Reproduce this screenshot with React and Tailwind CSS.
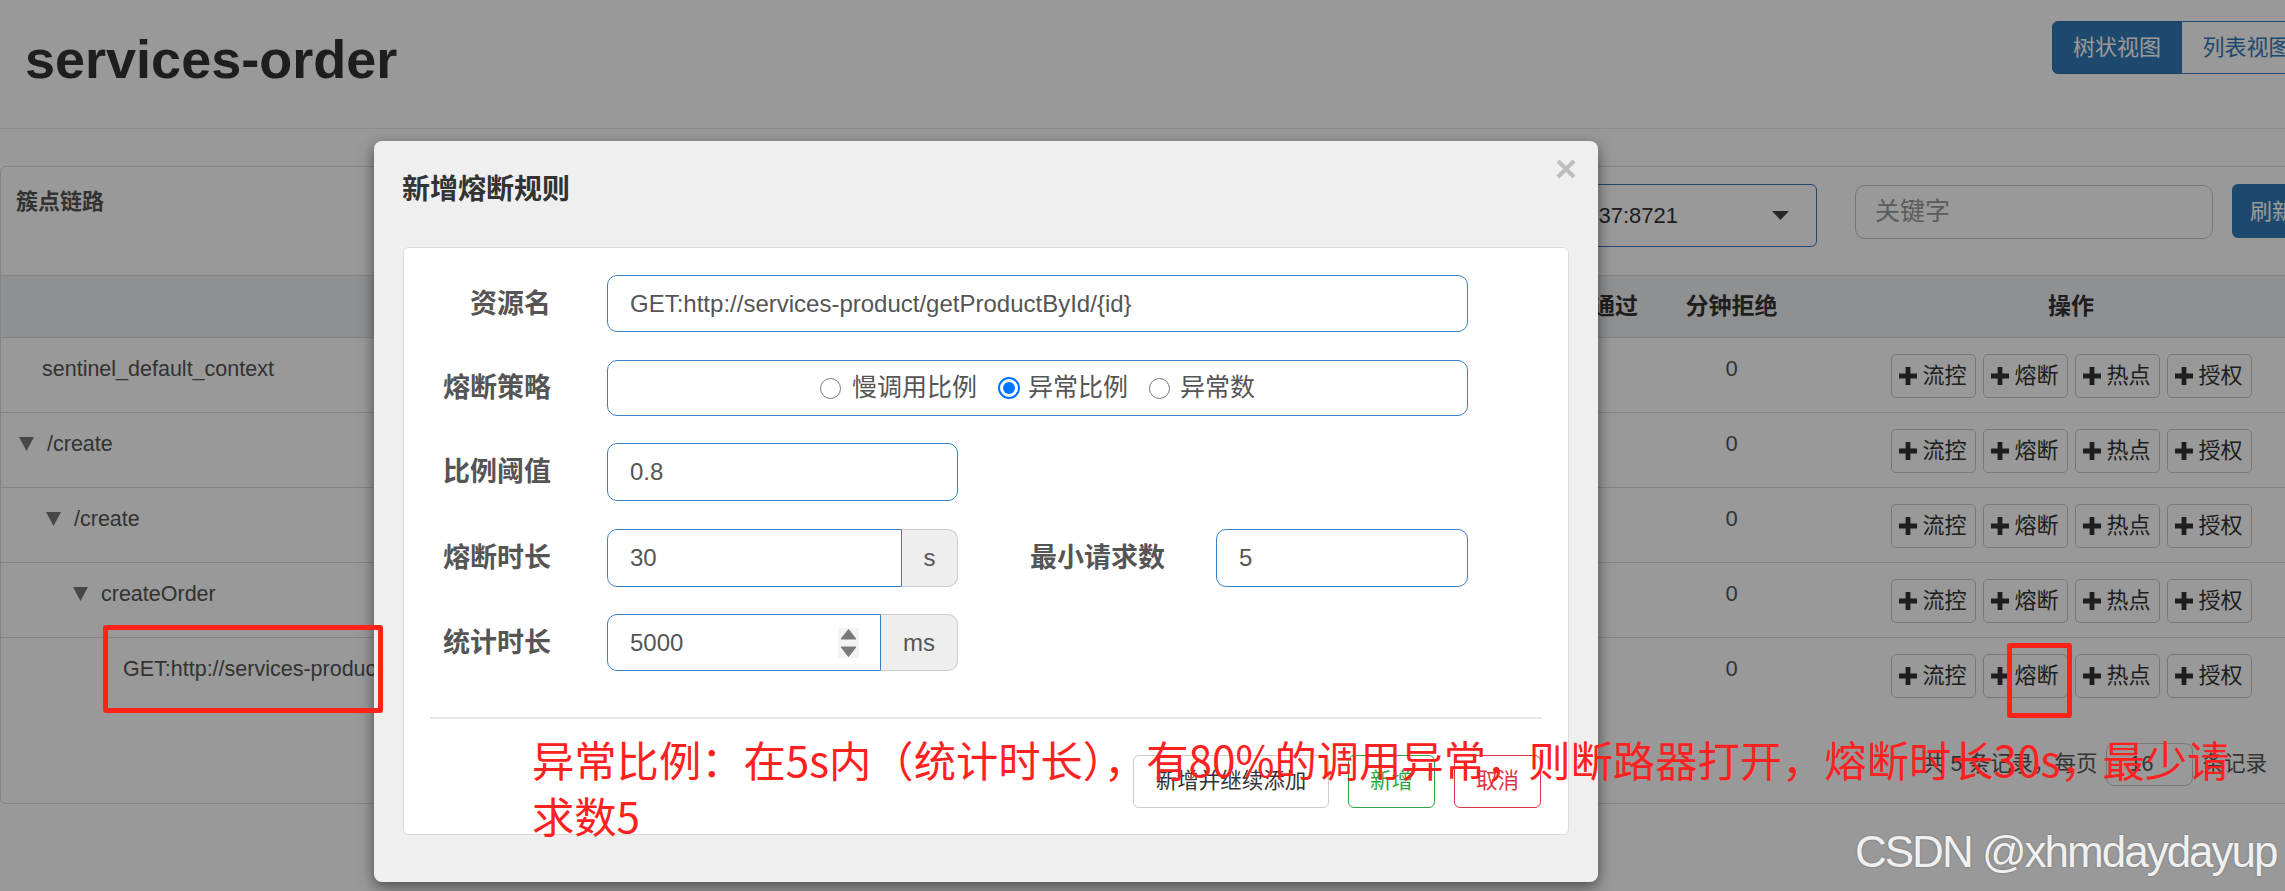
import React from 'react';

const rows = [
  { name: 'sentinel_default_context', arrow: false, indent: 'pl-[18px]' },
  { name: '/create', arrow: true, indent: 'pl-[18px]' },
  { name: '/create', arrow: true, indent: 'pl-[45px]' },
  { name: 'createOrder', arrow: true, indent: 'pl-[72px]' },
  { name: 'GET:http://services-product/getProductById/{id}', arrow: false, indent: 'pl-[99px]' },
];

const cols = 'grid grid-cols-[1001px_130px_130px_130px_130px_140px_139px_540px]';

function PlusIcon() {
  return (
    <svg width="18" height="18" viewBox="0 0 18 18" className="shrink-0">
      <path d="M6.6 0h4.8v6.6H18v4.8h-6.6V18H6.6v-6.6H0V6.6h6.6z" fill="#333" />
    </svg>
  );
}

function OpButton({ label }) {
  return (
    <div className="w-[85px] h-[44px] flex items-center justify-center gap-[5px] rounded-[5px] border border-[#c8c8c8] bg-white text-[22px] text-[#333]">
      <PlusIcon />
      <span className="leading-none">{label}</span>
    </div>
  );
}

function TreeCaret() {
  return (
    <svg width="15" height="14" viewBox="0 0 15 14" className="mr-[13px] shrink-0">
      <polygon points="0,0 15,0 7.5,14" fill="#777" />
    </svg>
  );
}

function Radio({ checked }) {
  if (checked) {
    return (
      <span className="w-[22px] h-[22px] rounded-full border-[2px] border-[#0075ff] bg-white flex items-center justify-center shrink-0">
        <span className="w-[12px] h-[12px] rounded-full bg-[#0075ff]" />
      </span>
    );
  }
  return <span className="w-[21px] h-[21px] rounded-full border-[1.5px] border-[#767676] bg-white shrink-0" />;
}

function Label({ children, w }) {
  return (
    <div className={`${w} shrink-0 text-right font-bold text-[27px] leading-[36px] text-[#555]`}>{children}</div>
  );
}

export default function App() {
  return (
    <div className="relative w-[2285px] h-[891px] overflow-hidden bg-white font-['Liberation_Sans','Noto_Sans_CJK_SC',sans-serif] text-[#333]">
      <div className="w-[2340px]">
        {/* header */}
        <div className="flex justify-between h-[129px] border-b border-[#e4e4e4]">
          <h1 className="pl-[25px] pt-[29px] text-[54px] leading-[60px] font-bold text-[#333]">services-order</h1>
          <div className="flex mt-[21px] mr-[28px] h-[53px] text-[22px]">
            <div className="w-[130px] flex items-center justify-center bg-[#337ab7] text-white rounded-l-[6px] border border-[#2e6da4]">树状视图</div>
            <div className="w-[130px] flex items-center justify-center bg-white text-[#337ab7] rounded-r-[6px] border border-[#337ab7] border-l-0">列表视图</div>
          </div>
        </div>

        {/* panel */}
        <div className="mt-[37px] rounded-[6px] border border-[#ddd] bg-white">
          <div className="flex h-[109px] border-b border-[#ddd]">
            <div className="pl-[15px] pt-[20px] font-bold text-[22px] leading-[30px] text-[#555]">簇点链路</div>
            <div className="ml-auto flex items-start pt-[17px] pr-[27px]">
              <div className="w-[420px] h-[63px] flex items-center rounded-[6px] border border-[#337ab7] bg-white">
                <span className="flex-1 text-right pr-[94px] text-[22px] text-[#333]">192.168.10.137:8721</span>
                <svg width="17" height="9" viewBox="0 0 17 9" className="mr-[27px]">
                  <polygon points="0,0 17,0 8.5,9" fill="#444" />
                </svg>
              </div>
              <div className="ml-[38px] mt-[1px] w-[358px] h-[54px] flex items-center rounded-[10px] border border-[#c6c6c6] bg-white pl-[19px] text-[25px] text-[#999]">关键字</div>
              <div className="ml-[19px] w-[80px] h-[54px] flex items-center justify-center rounded-[6px] bg-[#337ab7] text-white text-[22px]">刷新</div>
            </div>
          </div>

          {/* table header */}
          <div className={`${cols} h-[62px] items-center bg-[#eef0f3] border-b border-[#ddd] font-bold text-[23px] text-[#333] text-center`}>
            <div>资源名</div>
            <div>通过QPS</div>
            <div>拒绝QPS</div>
            <div>并发数</div>
            <div>平均RT</div>
            <div>分钟通过</div>
            <div>分钟拒绝</div>
            <div>操作</div>
          </div>

          {rows.map((r, i) => (
            <div
              key={i}
              className={`${cols} h-[75px] items-start pt-[16px] ${i < rows.length - 1 ? 'border-b border-[#ddd]' : ''} text-[#555]`}
            >
              <div className={`flex items-center h-[30px] ${r.indent}`}>
                {r.arrow ? <TreeCaret /> : <span className="w-[23px] shrink-0" />}
                <span className="text-[21.5px] leading-[30px] whitespace-nowrap">{r.name}</span>
              </div>
              <div className="text-center text-[22px] leading-[30px]">0</div>
              <div className="text-center text-[22px] leading-[30px]">0</div>
              <div className="text-center text-[22px] leading-[30px]">0</div>
              <div className="text-center text-[22px] leading-[30px]">0</div>
              <div className="text-center text-[22px] leading-[30px]">0</div>
              <div className="text-center text-[22px] leading-[30px]">0</div>
              <div className="flex justify-center gap-[7px]">
                <OpButton label="流控" />
                <OpButton label="熔断" />
                <OpButton label="热点" />
                <OpButton label="授权" />
              </div>
            </div>
          ))}

          {/* pagination */}
          <div className="h-[90px] pt-[30px] flex justify-end items-start pr-[72px] text-[21.5px] text-[#555]">
            <div className="flex items-center h-[43px] gap-[9px]">
              <span>共 5 条记录，每页</span>
              <span className="w-[87px] h-[43px] flex items-center pl-[22px] rounded-[8px] border border-[#c6c6c6] text-[#555]">16</span>
              <span>条记录</span>
            </div>
          </div>
        </div>
      </div>

      {/* backdrop */}
      <div className="absolute inset-0 bg-black/40" />

      {/* modal */}
      <div className="absolute left-[374px] top-[141px] w-[1224px] h-[741px] rounded-[8px] bg-[#efefef] shadow-[0_5px_15px_rgba(0,0,0,0.5)] flex flex-col">
        <div className="flex justify-between h-[106px] shrink-0">
          <div className="pl-[28px] pt-[31px] text-[28px] leading-[36px] font-bold text-[#333]">新增熔断规则</div>
          <svg width="20" height="20" viewBox="0 0 20 20" className="mt-[18px] mr-[22px]">
            <path d="M2 2L18 18M18 2L2 18" stroke="#bdbdbd" strokeWidth="4" />
          </svg>
        </div>

        <div className="mx-[29px] h-[588px] rounded-[6px] border border-[#dcdcdc] bg-white pt-[27px]">
          {/* row 1 */}
          <div className="flex items-center h-[57px]">
            <Label w="w-[147px]">资源名</Label>
            <div className="ml-[56px] w-[861px] h-[57px] flex items-center pl-[22px] rounded-[10px] border border-[#3a7fc4] text-[24px] text-[#555]">
              GET:http://services-product/getProductById/&#123;id&#125;
            </div>
          </div>
          {/* row 2 */}
          <div className="flex items-center h-[56px] mt-[28px]">
            <Label w="w-[147px]">熔断策略</Label>
            <div className="ml-[56px] w-[861px] h-[56px] flex items-center justify-center gap-[21px] rounded-[10px] border border-[#3a7fc4] text-[25px] text-[#555]">
              <span className="flex items-center gap-[11px]"><Radio /><span>慢调用比例</span></span>
              <span className="flex items-center gap-[8px]"><Radio checked /><span>异常比例</span></span>
              <span className="flex items-center gap-[10px]"><Radio /><span>异常数</span></span>
            </div>
          </div>
          {/* row 3 */}
          <div className="flex items-center h-[58px] mt-[27px]">
            <Label w="w-[147px]">比例阈值</Label>
            <div className="ml-[56px] w-[351px] h-[58px] flex items-center pl-[22px] rounded-[10px] border border-[#3a7fc4] text-[24px] text-[#555]">0.8</div>
          </div>
          {/* row 4 */}
          <div className="flex items-center h-[58px] mt-[28px]">
            <Label w="w-[147px]">熔断时长</Label>
            <div className="ml-[56px] flex h-[58px]">
              <div className="w-[295px] flex items-center pl-[22px] rounded-l-[10px] border border-[#3a7fc4] text-[24px] text-[#555]">30</div>
              <div className="w-[56px] flex items-center justify-center rounded-r-[10px] border border-l-0 border-[#ccc] bg-[#eee] text-[24px] text-[#555]">s</div>
            </div>
            <Label w="w-[207px]">最小请求数</Label>
            <div className="ml-[51px] w-[252px] h-[58px] flex items-center pl-[22px] rounded-[10px] border border-[#3a7fc4] text-[24px] text-[#555]">5</div>
          </div>
          {/* row 5 */}
          <div className="flex items-center h-[57px] mt-[27px]">
            <Label w="w-[147px]">统计时长</Label>
            <div className="ml-[56px] flex h-[57px]">
              <div className="w-[274px] flex items-center pl-[22px] pr-[21px] rounded-l-[10px] border border-[#3a7fc4] text-[24px] text-[#555]">
                <span className="flex-1">5000</span>
                <svg width="21" height="30" viewBox="0 0 21 30">
                  <rect x="0" y="0" width="21" height="30" fill="#f3f3f3" />
                  <path d="M10.5 1.5L18 11H3z" fill="#7a7a7a" strokeLinejoin="round" stroke="#7a7a7a" strokeWidth="1" />
                  <path d="M3 19h15l-7.5 9.5z" fill="#7a7a7a" strokeLinejoin="round" stroke="#7a7a7a" strokeWidth="1" />
                </svg>
              </div>
              <div className="w-[77px] flex items-center justify-center rounded-r-[10px] border border-l-0 border-[#ccc] bg-[#eee] text-[24px] text-[#555]">ms</div>
            </div>
          </div>

          <div className="mt-[46px] mx-[26px] h-[2px] bg-[#e5e5e5]" />

          <div className="mt-[36px] flex justify-end gap-[19px] pr-[27px] text-[21.5px]">
            <div className="w-[196px] h-[53px] flex items-center justify-center rounded-[6px] border border-[#ccc] bg-white text-[#333]">新增并继续添加</div>
            <div className="w-[87px] h-[53px] flex items-center justify-center rounded-[6px] border border-[#28a745] bg-white text-[#28a745]">新增</div>
            <div className="w-[87px] h-[53px] flex items-center justify-center rounded-[6px] border border-[#dc3545] bg-white text-[#dc3545]">取消</div>
          </div>
        </div>
      </div>

      {/* annotations */}
      <div className="absolute left-[103px] top-[625px] w-[280px] h-[88px] rounded-[3px] border-[5px] border-[#ff2218]" />
      <div className="absolute left-[2007px] top-[643px] w-[65px] h-[75px] rounded-[3px] border-[5px] border-[#ff2218]" />
      <div className="absolute left-[532px] top-[731px] text-[42.3px] leading-[56px] text-[#ff2020] whitespace-nowrap font-['Noto_Sans_CJK_SC',sans-serif]">
        异常比例：在5s内（统计时长），有80%的调用异常，则断路器打开，熔断时长30s，最少请
        <br />
        求数5
      </div>
      <div className="absolute left-[1855px] top-[830px] text-[44px] leading-[44px] tracking-[-2px] text-white/90 [text-shadow:0_0_2px_rgba(0,0,0,0.35)] whitespace-nowrap">
        CSDN @xhmdaydayup
      </div>
    </div>
  );
}
